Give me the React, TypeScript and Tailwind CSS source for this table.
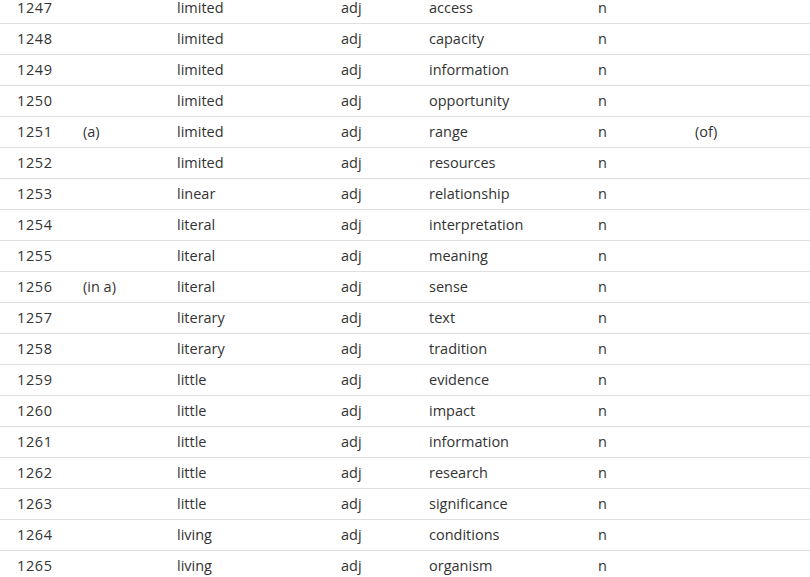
const rows: [string, string, string, string, string, string, string][] = [
  ['1247', '', 'limited', 'adj', 'access', 'n', ''],
  ['1248', '', 'limited', 'adj', 'capacity', 'n', ''],
  ['1249', '', 'limited', 'adj', 'information', 'n', ''],
  ['1250', '', 'limited', 'adj', 'opportunity', 'n', ''],
  ['1251', '(a)', 'limited', 'adj', 'range', 'n', '(of)'],
  ['1252', '', 'limited', 'adj', 'resources', 'n', ''],
  ['1253', '', 'linear', 'adj', 'relationship', 'n', ''],
  ['1254', '', 'literal', 'adj', 'interpretation', 'n', ''],
  ['1255', '', 'literal', 'adj', 'meaning', 'n', ''],
  ['1256', '(in a)', 'literal', 'adj', 'sense', 'n', ''],
  ['1257', '', 'literary', 'adj', 'text', 'n', ''],
  ['1258', '', 'literary', 'adj', 'tradition', 'n', ''],
  ['1259', '', 'little', 'adj', 'evidence', 'n', ''],
  ['1260', '', 'little', 'adj', 'impact', 'n', ''],
  ['1261', '', 'little', 'adj', 'information', 'n', ''],
  ['1262', '', 'little', 'adj', 'research', 'n', ''],
  ['1263', '', 'little', 'adj', 'significance', 'n', ''],
  ['1264', '', 'living', 'adj', 'conditions', 'n', ''],
  ['1265', '', 'living', 'adj', 'organism', 'n', ''],
];

const App = () => {
  return (
    <div className="h-screen overflow-hidden bg-white font-['Open_Sans',sans-serif] text-[14.5px] text-[#333]">
      <div className="-mt-[7px]">
        {rows.map((r) => (
          <div
            key={r[0]}
            className="grid h-[31px] grid-cols-[66px_94px_164px_88px_169px_97px_1fr] items-center border-b border-[#dedede] pl-[17px]"
          >
            {r.map((cell, i) => (
              <div
                key={i}
                className={i === 0 ? 'whitespace-nowrap leading-none tracking-[0.6px]' : 'whitespace-nowrap leading-none'}
              >
                {cell}
              </div>
            ))}
          </div>
        ))}
      </div>
    </div>
  );
};

export default App;
